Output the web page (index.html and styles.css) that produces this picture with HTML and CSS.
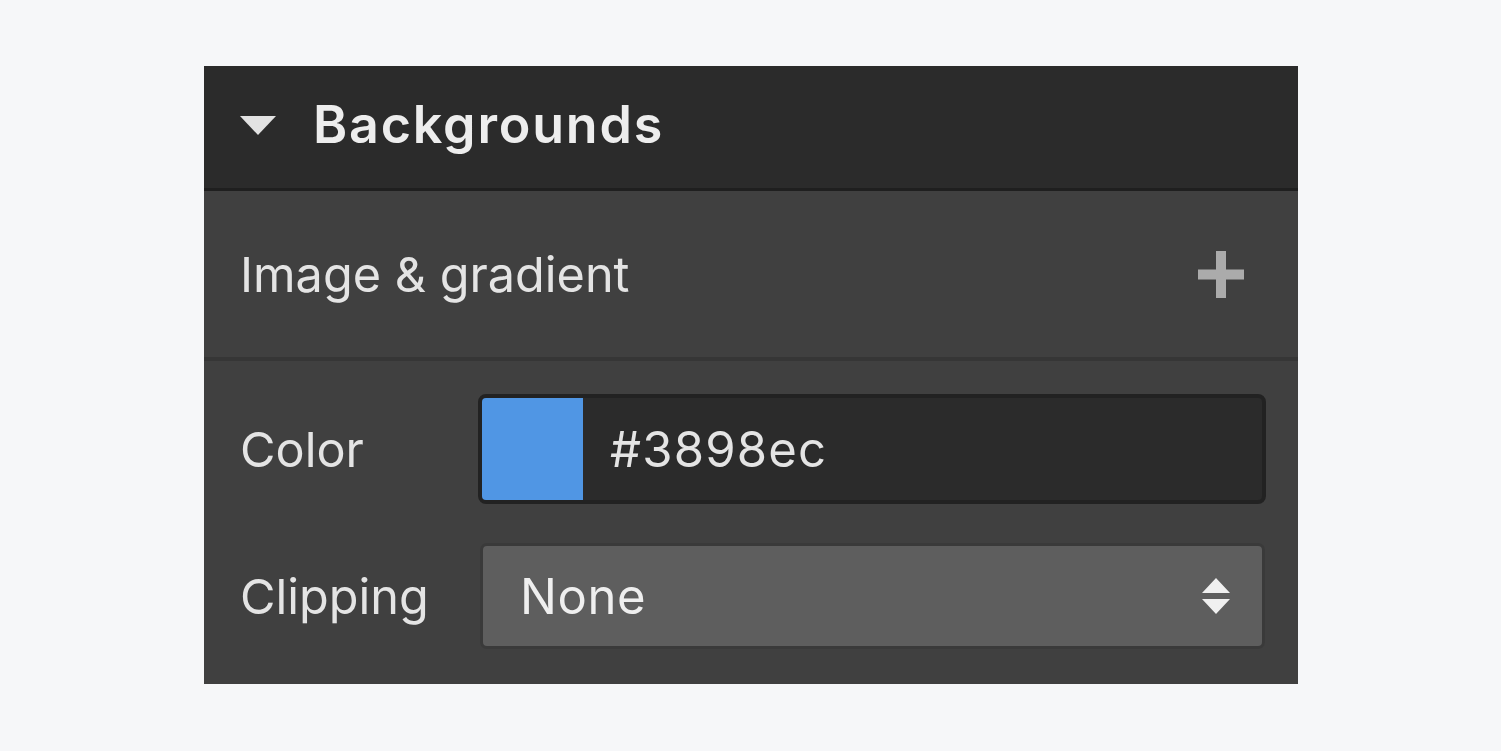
FILE: index.html
```html
<!DOCTYPE html>
<html>
<head>
<meta charset="utf-8">
<link rel="stylesheet" href="styles.css">
</head>
<body>
<div class="panel">
  <div class="header">
    <svg class="caret" width="36" height="19" viewBox="0 0 36 19"><path d="M0 0H36L18 19Z" fill="#e2e2e2"/></svg>
    <span class="title">Backgrounds</span>
  </div>
  <div class="section layers">
    <span class="label">Image &amp; gradient</span>
    <svg class="plus" width="46" height="47" viewBox="0 0 46 47"><rect x="18" y="0" width="10" height="47" fill="#ababab"/><rect x="0" y="18.5" width="46" height="10" fill="#ababab"/></svg>
  </div>
  <div class="section props">
    <div class="row">
      <span class="label">Color</span>
      <div class="color-input">
        <div class="swatch"></div>
        <span class="value">#3898ec</span>
      </div>
    </div>
    <div class="row">
      <span class="label">Clipping</span>
      <div class="select">
        <span class="value">None</span>
        <svg class="arrows" width="28" height="36" viewBox="0 0 28 36"><path d="M14 0L28 15H0Z M0 21H28L14 36Z" fill="#f0f0f0"/></svg>
      </div>
    </div>
  </div>
</div>
</body>
</html>
```
FILE: styles.css
```css
html, body {
  margin: 0;
  padding: 0;
  background: #f6f7f9;
}
body {
  font-family: Inter, "Noto Sans", sans-serif;
  padding-top: 66px;
  padding-left: 204px;
  height: 751px;
  box-sizing: border-box;
}
.panel {
  width: 1094px;
  height: 618px;
  background: #404040;
  display: flex;
  flex-direction: column;
}
.header {
  height: 122px;
  background: #2b2b2b;
  border-bottom: 3px solid #1f1f1f;
  display: flex;
  align-items: center;
  padding-left: 36px;
  gap: 37px;
  flex-shrink: 0;
}
.caret {
  display: block;
  margin-top: -4px;
}
.title {
  color: #ededed;
  font-size: 52px;
  font-weight: 600;
  letter-spacing: 1.8px;
  margin-top: -5px;
}
.section {
  display: flex;
  padding-left: 36px;
}
.layers {
  height: 166px;
  align-items: center;
  justify-content: space-between;
  padding-right: 54px;
  border-bottom: 4px solid #363636;
  flex-shrink: 0;
}
.label {
  color: #e4e4e4;
  font-size: 48.6px;
  font-weight: 400;
}
.plus { display: block; }
.props {
  flex-direction: column;
  padding-top: 33px;
  padding-right: 32px;
  gap: 39px;
}
.row {
  display: flex;
  align-items: center;
}
.row .label {
  width: 238px;
  flex-shrink: 0;
}
.color-input {
  flex: 1;
  height: 110px;
  box-sizing: border-box;
  border: 4px solid #222222;
  border-radius: 8px;
  background: #2b2b2b;
  display: flex;
  align-items: center;
  overflow: hidden;
}
.swatch {
  width: 101px;
  height: 100%;
  background: #5096e4;
}
.color-input .value {
  margin-left: 27px;
  color: #e4e4e4;
  font-size: 49px;
  letter-spacing: 1.2px;
}
.select {
  flex: 1;
  height: 106px;
  margin: 0 1px 0 2px;
  box-sizing: border-box;
  border: 3px solid #3a3a3a;
  border-radius: 7px;
  background: #5e5e5e;
  display: flex;
  align-items: center;
  justify-content: space-between;
  padding-left: 37px;
  padding-right: 32px;
}
.select .value {
  color: #efefef;
  font-size: 49px;
  letter-spacing: 0.6px;
}
.arrows { display: block; }
```
